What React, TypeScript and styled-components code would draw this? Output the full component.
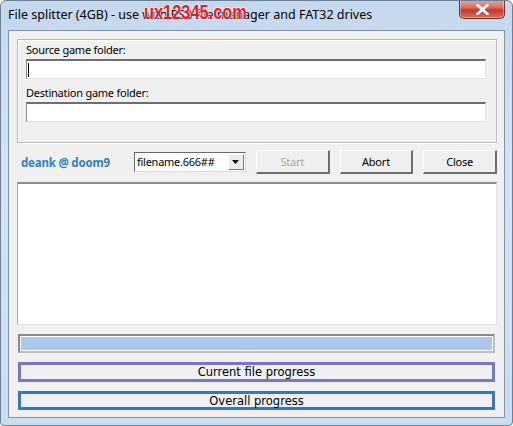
import React from "react";
import styled, { createGlobalStyle } from "styled-components";

const GlobalStyle = createGlobalStyle`
  html, body {
    margin: 0;
    padding: 0;
    background: #ffffff;
  }
`;

const uiFont = `"Segoe UI", "Noto Sans", "Liberation Sans", sans-serif`;

const Window = styled.div`
  position: relative;
  width: 513px;
  height: 426px;
  box-sizing: border-box;
  display: flex;
  flex-direction: column;
  padding: 0 7px 7px 7px;
  border: 1px solid #6d7f94;
  border-radius: 6px 6px 4px 4px;
  background: linear-gradient(180deg, #c4d8ee 0%, #d3e3f4 40%, #c9dcf0 100%);
  font-family: ${uiFont};
  overflow: hidden;
`;

const TitleBar = styled.div`
  flex-shrink: 0;
  height: 29px;
  display: flex;
  align-items: flex-start;
  justify-content: space-between;
`;

const Title = styled.div`
  margin-top: 5px;
  font-size: 12.5px;
  line-height: 18px;
  color: #000000;
  white-space: nowrap;
`;

const Watermark = styled.div`
  position: absolute;
  left: 143px;
  top: -1px;
  font-family: "Liberation Sans", Arial, sans-serif;
  font-weight: bold;
  font-size: 21px;
  color: #e01e2a;
  transform: scaleX(0.78);
  transform-origin: left top;
  text-shadow: 0 0 2px #ffffff, 0 0 2px #ffffff;
`;

const CloseButton = styled.div`
  width: 46px;
  height: 19px;
  margin-top: -1px;
  box-sizing: border-box;
  border: 1px solid #7e2a22;
  border-top: none;
  border-radius: 0 0 5px 5px;
  background: linear-gradient(180deg, #e9a99d 0%, #d46a5c 45%, #c2392c 55%, #d5715f 100%);
  box-shadow: inset 0 0 0 1px rgba(255, 255, 255, 0.35);
  display: flex;
  align-items: center;
  justify-content: center;
`;

const Client = styled.div`
  flex: 1;
  display: flex;
  flex-direction: column;
  padding: 8px 7px 7px 8px;
  background: #f0f0f0;
  border: 1px solid #8094ab;
  box-sizing: border-box;
`;

const Group = styled.div`
  flex-shrink: 0;
  height: 104px;
  box-sizing: border-box;
  border: 1px solid #b9b9b9;
  box-shadow: inset 1px 1px 0 #ffffff, 1px 1px 0 #ffffff;
  padding: 0 10px 0 8px;
  display: flex;
  flex-direction: column;
`;

const Field = styled.div<{ $gap?: number }>`
  display: flex;
  flex-direction: column;
  margin-top: ${({ $gap }) => $gap ?? 0}px;
`;

const Label = styled.div`
  font-size: 11px;
  letter-spacing: -0.25px;
  line-height: 19px;
  color: #000000;
`;

const TextBox = styled.div`
  height: 20px;
  box-sizing: border-box;
  background: #ffffff;
  border-top: 2px solid #6e6e6e;
  border-left: 1px solid #8a8a8a;
  border-right: 1px solid #e3e3e3;
  border-bottom: 1px solid #e3e3e3;
  display: flex;
  align-items: center;
  padding-left: 1px;
`;

const Caret = styled.span`
  width: 1px;
  height: 14px;
  background: #000000;
`;

const ActionRow = styled.div`
  flex-shrink: 0;
  height: 24px;
  margin-top: 7px;
  display: flex;
  align-items: center;
`;

const Credit = styled.div`
  width: 115px;
  margin-left: 4px;
  font-size: 11.5px;
  letter-spacing: -0.2px;
  font-weight: bold;
  color: #2f80bd;
`;

const Select = styled.div`
  width: 114px;
  height: 20px;
  box-sizing: border-box;
  display: flex;
  background: #ffffff;
  border-top: 1px solid #6a6a6a;
  border-left: 1px solid #6a6a6a;
  border-right: 1px solid #dcdcdc;
  border-bottom: 1px solid #dcdcdc;
`;

const SelectValue = styled.div`
  flex: 1;
  font-size: 11px;
  letter-spacing: -0.25px;
  line-height: 18px;
  padding-left: 2px;
  color: #000000;
`;

const SelectArrow = styled.div`
  width: 16px;
  margin: 1px;
  box-sizing: border-box;
  background: #ececec;
  border-top: 1px solid #ffffff;
  border-left: 1px solid #ffffff;
  border-right: 1px solid #7a7a7a;
  border-bottom: 1px solid #7a7a7a;
  display: flex;
  align-items: center;
  justify-content: center;
`;

const Button = styled.div<{ $disabled?: boolean }>`
  width: 75px;
  height: 24px;
  box-sizing: border-box;
  margin-left: 10px;
  background: #efefef;
  border-top: 1px solid #ffffff;
  border-left: 1px solid #ffffff;
  border-right: 2px solid #6d6d6d;
  border-bottom: 2px solid #6d6d6d;
  display: flex;
  align-items: center;
  justify-content: center;
  font-size: 11px;
  letter-spacing: -0.2px;
  color: ${({ $disabled }) => ($disabled ? "#a6a6a6" : "#000000")};

  &:first-of-type {
    margin-left: 4px;
  }
`;

const LogArea = styled.div`
  flex-shrink: 0;
  height: 143px;
  margin-top: 8px;
  box-sizing: border-box;
  background: #ffffff;
  border-top: 2px solid #8c8c8c;
  border-left: 1px solid #a8a8a8;
  border-right: 1px solid #e2e2e2;
  border-bottom: 1px solid #e2e2e2;
`;

const ProgressTrack = styled.div`
  flex-shrink: 0;
  height: 19px;
  margin: 9px 2px 0 1px;
  box-sizing: border-box;
  border: 2px solid #8a8a8a;
  border-right-color: #bdbdbd;
  border-bottom-color: #bdbdbd;
  background: #fbfbfb;
  padding: 1px;
`;

const ProgressFill = styled.div`
  height: 100%;
  background: #a9c8ec;
`;

const ProgressButton = styled.div<{ $tone: string; $height: number }>`
  flex-shrink: 0;
  height: ${({ $height }) => $height}px;
  margin: 9px 2px 0 1px;
  box-sizing: border-box;
  border: 3px solid ${({ $tone }) => $tone};
  background: #eef0f4;
  display: flex;
  align-items: center;
  justify-content: center;
  font-family: "DejaVu Sans", Verdana, sans-serif;
  font-size: 11.5px;
  color: #000000;
`;

export default function App() {
  return (
    <>
      <GlobalStyle />
      <Window>
        <TitleBar>
          <Title>File splitter (4GB) - use with PS3 file manager and FAT32 drives</Title>
          <CloseButton>
            <svg width="13" height="11" viewBox="0 0 13 11">
              <path
                d="M1.5 1 L11.5 10 M11.5 1 L1.5 10"
                stroke="#ffffff"
                strokeWidth="2.6"
                strokeLinecap="square"
              />
            </svg>
          </CloseButton>
        </TitleBar>
        <Watermark>ux12345.com</Watermark>
        <Client>
          <Group>
            <Field>
              <Label>Source game folder:</Label>
              <TextBox>
                <Caret />
              </TextBox>
            </Field>
            <Field $gap={4}>
              <Label>Destination game folder:</Label>
              <TextBox />
            </Field>
          </Group>
          <ActionRow>
            <Credit>deank @ doom9</Credit>
            <Select>
              <SelectValue>filename.666##</SelectValue>
              <SelectArrow>
                <svg width="7" height="4" viewBox="0 0 7 4">
                  <path d="M0 0 H7 L3.5 4 Z" fill="#000000" />
                </svg>
              </SelectArrow>
            </Select>
            <Button $disabled>Start</Button>
            <Button>Abort</Button>
            <Button>Close</Button>
          </ActionRow>
          <LogArea />
          <ProgressTrack>
            <ProgressFill />
          </ProgressTrack>
          <ProgressButton $tone="#7c76c0" $height={20}>
            Current file progress
          </ProgressButton>
          <ProgressButton $tone="#3b78b2" $height={19}>
            Overall progress
          </ProgressButton>
        </Client>
      </Window>
    </>
  );
}
